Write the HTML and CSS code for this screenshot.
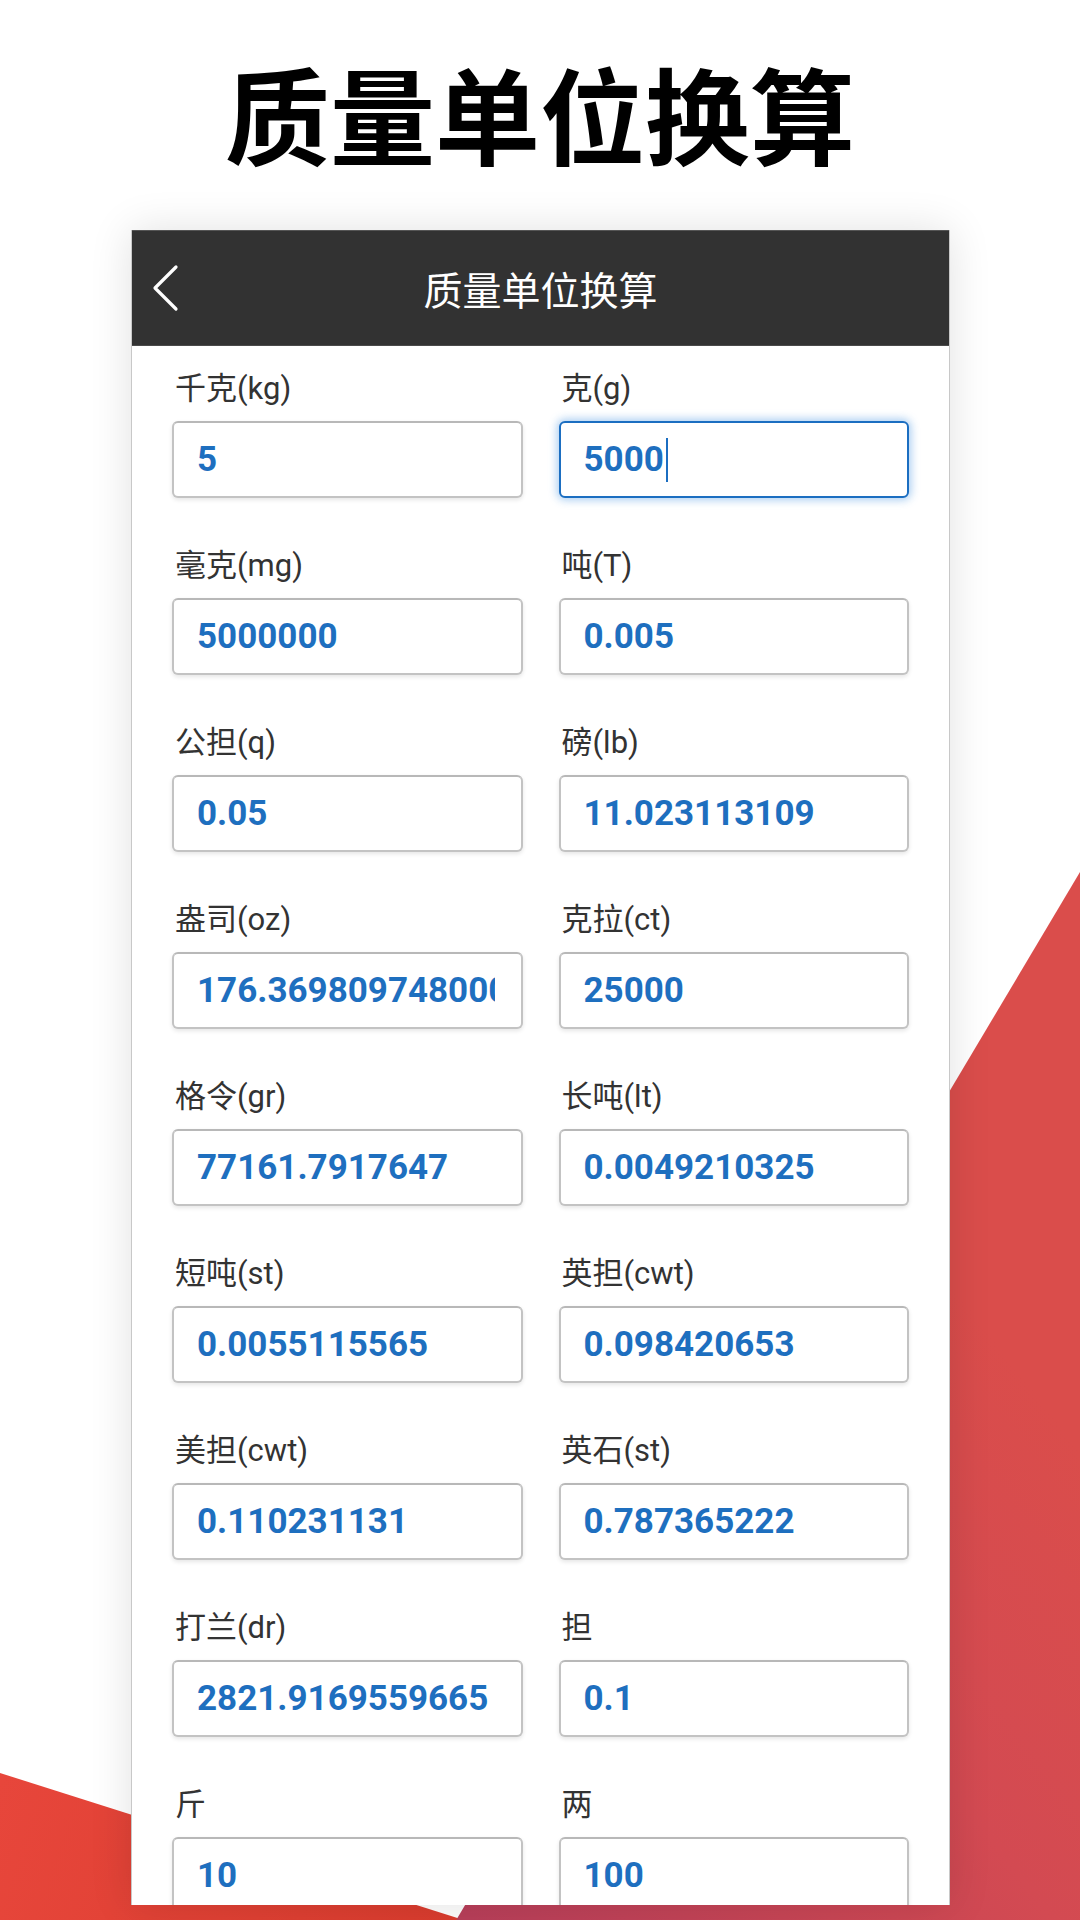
FILE: index.html
```html
<!DOCTYPE html>
<html lang="zh-CN">
<head>
<meta charset="utf-8">
<title>质量单位换算</title>
<link rel="stylesheet" href="styles.css">
</head>
<body>
<h1 class="title">质量单位换算</h1>
<div class="card">
  <div class="topbar">
    <div class="back">
      <svg width="28" height="48" viewBox="0 0 28 48"><polyline points="24,3 3,24 24,45" fill="none" stroke="#ffffff" stroke-width="3.2" stroke-linecap="round" stroke-linejoin="round"/></svg>
    </div>
    <div class="bar-title">质量单位换算</div>
    <div class="bar-spacer"></div>
  </div>
  <div class="fields">
    <div class="field"><div class="label">千克(kg)</div><div class="box"><span class="val">5</span></div></div>
    <div class="field"><div class="label">克(g)</div><div class="box focus"><span class="val">5000</span><span class="caret"></span></div></div>
    <div class="field"><div class="label">毫克(mg)</div><div class="box"><span class="val">5000000</span></div></div>
    <div class="field"><div class="label">吨(T)</div><div class="box"><span class="val">0.005</span></div></div>
    <div class="field"><div class="label">公担(q)</div><div class="box"><span class="val">0.05</span></div></div>
    <div class="field"><div class="label">磅(lb)</div><div class="box"><span class="val">11.023113109</span></div></div>
    <div class="field"><div class="label">盎司(oz)</div><div class="box"><span class="val">176.3698097480001</span></div></div>
    <div class="field"><div class="label">克拉(ct)</div><div class="box"><span class="val">25000</span></div></div>
    <div class="field"><div class="label">格令(gr)</div><div class="box"><span class="val">77161.7917647</span></div></div>
    <div class="field"><div class="label">长吨(lt)</div><div class="box"><span class="val">0.0049210325</span></div></div>
    <div class="field"><div class="label">短吨(st)</div><div class="box"><span class="val">0.0055115565</span></div></div>
    <div class="field"><div class="label">英担(cwt)</div><div class="box"><span class="val">0.098420653</span></div></div>
    <div class="field"><div class="label">美担(cwt)</div><div class="box"><span class="val">0.110231131</span></div></div>
    <div class="field"><div class="label">英石(st)</div><div class="box"><span class="val">0.787365222</span></div></div>
    <div class="field"><div class="label">打兰(dr)</div><div class="box"><span class="val">2821.9169559665</span></div></div>
    <div class="field"><div class="label">担</div><div class="box"><span class="val">0.1</span></div></div>
    <div class="field"><div class="label">斤</div><div class="box"><span class="val">10</span></div></div>
    <div class="field"><div class="label">两</div><div class="box"><span class="val">100</span></div></div>
  </div>
</div>
</body>
</html>
```
FILE: styles.css
```css
html, body {
  margin: 0;
  padding: 0;
}
body {
  width: 1080px;
  height: 1920px;
  overflow: hidden;
  font-family: Roboto, "Noto Sans CJK SC", sans-serif;
  background-color: #ffffff;
  background-image: url("data:image/svg+xml;utf8,<svg xmlns='http://www.w3.org/2000/svg' width='1080' height='1920' viewBox='0 0 1080 1920'><defs><linearGradient id='l' gradientUnits='userSpaceOnUse' x1='0' y1='1780' x2='450' y2='1920'><stop offset='0' stop-color='%23e7463b'/><stop offset='1' stop-color='%23da3c2e'/></linearGradient><linearGradient id='r' gradientUnits='userSpaceOnUse' x1='470' y1='1920' x2='1080' y2='1450'><stop offset='0' stop-color='%23b93f5a'/><stop offset='0.6' stop-color='%23d34a52'/><stop offset='1' stop-color='%23da4d4b'/></linearGradient></defs><polygon points='0,1773 470,1922 0,1922' fill='url(%23l)'/><polygon points='1080,872 1080,1922 455,1922' fill='url(%23r)'/></svg>");
  background-repeat: no-repeat;
  background-size: 1080px 1920px;
}
.title {
  margin: 0;
  padding-top: 49px;
  height: 125px;
  line-height: 125px;
  font-size: 105px;
  font-weight: 700;
  text-align: center;
  color: #000000;
  font-family: "Noto Sans CJK SC", sans-serif;
}
.card {
  margin: 56px 0 0 131px;
  width: 819px;
  height: 1675px;
  box-sizing: border-box;
  overflow: hidden;
  background: #ffffff;
  border-left: 1px solid #c8c8c8;
  border-right: 1px solid #c8c8c8;
  box-shadow: 0 0 40px rgba(0, 0, 0, 0.12);
}
.topbar {
  height: 116px;
  box-sizing: border-box;
  background: #323232;
  border-top: 1px solid #555555;
  border-bottom: 1px solid #4a4a4a;
  display: grid;
  grid-template-columns: 1fr auto 1fr;
  align-items: center;
}
.back {
  padding-left: 20px;
  display: flex;
  align-items: center;
}
.back svg {
  display: block;
}
.bar-title {
  color: #ffffff;
  font-size: 39px;
  font-family: "Noto Sans CJK SC", sans-serif;
  line-height: 50px;
}
.fields {
  padding: 21px 40px 0 40px;
  display: grid;
  grid-template-columns: minmax(0, 1fr) minmax(0, 1fr);
  column-gap: 36px;
  row-gap: 46px;
}
.field {
  min-width: 0;
}
.label {
  height: 44px;
  line-height: 44px;
  font-size: 31px;
  color: #333333;
  padding-left: 3px;
  margin-bottom: 10px;
  font-family: Roboto, "Noto Sans CJK SC", sans-serif;
}
.box {
  height: 77px;
  min-width: 0;
  box-sizing: border-box;
  border: 2px solid #c3c3c3;
  border-top-color: #b8b8b8;
  border-radius: 6px;
  background: #ffffff;
  box-shadow: 0 2px 4px rgba(0, 0, 0, 0.10);
  display: flex;
  align-items: center;
  padding-left: 23px;
  padding-right: 26px;
}
.box.focus {
  border-color: #1b6ec1;
  box-shadow: 0 0 8px 2px rgba(40, 130, 220, 0.40);
}
.val {
  min-width: 0;
  flex: 0 1 auto;
  font-family: Roboto, sans-serif;
  font-weight: 700;
  font-size: 35px;
  color: #1e6fbf;
  white-space: nowrap;
  overflow: hidden;
  line-height: 44px;
}
.caret {
  width: 2px;
  height: 44px;
  margin-left: 2px;
  background: #1b6ec1;
  flex: none;
}
```
